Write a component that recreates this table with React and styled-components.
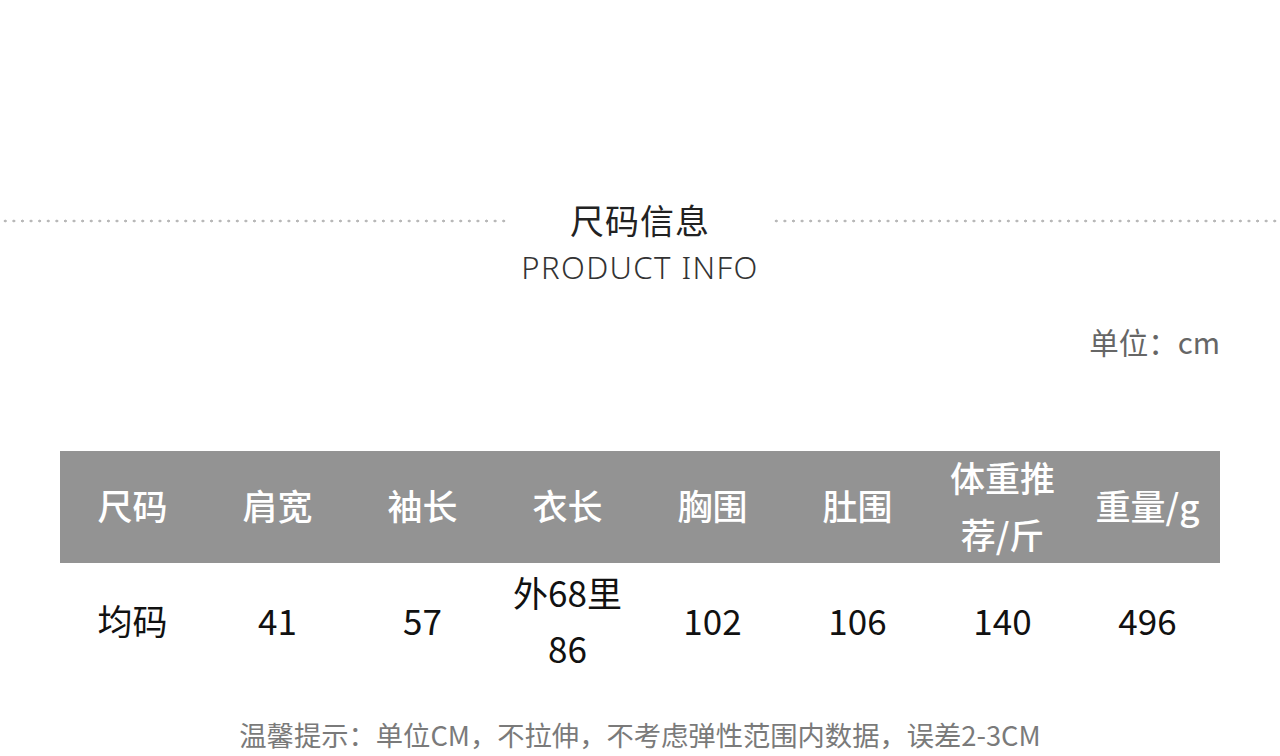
import React from "react";
import styled, { createGlobalStyle } from "styled-components";

const Global = createGlobalStyle`
  html, body { margin: 0; padding: 0; background: #fff; }
  body { font-family: "Noto Sans CJK SC", "Noto Sans", sans-serif; }
`;

const Page = styled.div`
  width: 1280px;
  height: 756px;
  overflow: hidden;
  background: #fff;
  padding-top: 199px;
  box-sizing: border-box;
`;

const Heading = styled.div`
  display: grid;
  grid-template-columns: 1fr 264px 1fr;
  align-items: start;
`;

const Dots = styled.div`
  height: 4px;
  margin-top: 20px;
  background-image: radial-gradient(circle, #b8b8b8 1.2px, transparent 1.7px);
  background-size: 8.6px 4px;
  background-repeat: repeat-x;
  background-position: ${(p) => (p.$side === "left" ? "left" : "right")} center;
`;

const TitleBox = styled.div`
  display: flex;
  flex-direction: column;
  align-items: center;
`;

const TitleCn = styled.div`
  font-family: "Noto Sans CJK SC", sans-serif;
  font-size: 34px;
  line-height: 42px;
  color: #222;
  letter-spacing: 1px;
`;

const TitleEn = styled.div`
  font-family: "Noto Sans", sans-serif;
  font-weight: 300;
  font-size: 31px;
  line-height: 40px;
  margin-top: 6px;
  letter-spacing: 1.4px;
  color: #333;
  white-space: nowrap;
`;

const UnitRow = styled.div`
  display: flex;
  justify-content: flex-end;
  padding-right: 60px;
  margin-top: 34px;
`;

const Unit = styled.div`
  font-family: "Noto Sans CJK SC", sans-serif;
  font-size: 29.5px;
  line-height: 40px;
  color: #666;
`;

const Table = styled.div`
  margin: 90px 60px 0;
  display: grid;
  grid-template-columns: repeat(8, 145px);
`;

const HeadCell = styled.div`
  background: #939393;
  height: 112px;
  box-sizing: border-box;
  display: flex;
  align-items: center;
  justify-content: center;
  text-align: center;
  padding: 0 10px 5px;
  color: #fff;
  font-size: 35px;
  font-weight: 500;
  line-height: 57px;
  font-family: "Noto Sans CJK SC", sans-serif;
`;

const BodyCell = styled.div`
  height: 118px;
  box-sizing: border-box;
  display: flex;
  align-items: center;
  justify-content: center;
  text-align: center;
  padding: 0 10px 4px;
  color: #111;
  font-size: 35px;
  line-height: 56px;
  font-family: "Noto Sans CJK SC", sans-serif;
`;

const Note = styled.div`
  text-align: center;
  font-family: "Noto Sans CJK SC", sans-serif;
  font-size: 27.3px;
  line-height: 40px;
  color: #7a7a7a;
  margin-top: 33px;
  white-space: nowrap;
`;

const heads = ["尺码", "肩宽", "袖长", "衣长", "胸围", "肚围", "体重推荐/斤", "重量/g"];
const row = ["均码", "41", "57", "外68里86", "102", "106", "140", "496"];

export default function App() {
  return (
    <>
      <Global />
      <Page>
        <Heading>
          <Dots $side="right" />
          <TitleBox>
            <TitleCn>尺码信息</TitleCn>
            <TitleEn>PRODUCT INFO</TitleEn>
          </TitleBox>
          <Dots $side="left" />
        </Heading>
        <UnitRow>
          <Unit>单位：cm</Unit>
        </UnitRow>
        <Table>
          {heads.map((h) => (
            <HeadCell key={h}>{h}</HeadCell>
          ))}
          {row.map((c, i) => (
            <BodyCell key={i}>{c}</BodyCell>
          ))}
        </Table>
        <Note>温馨提示：单位CM，不拉伸，不考虑弹性范围内数据，误差2-3CM</Note>
      </Page>
    </>
  );
}
